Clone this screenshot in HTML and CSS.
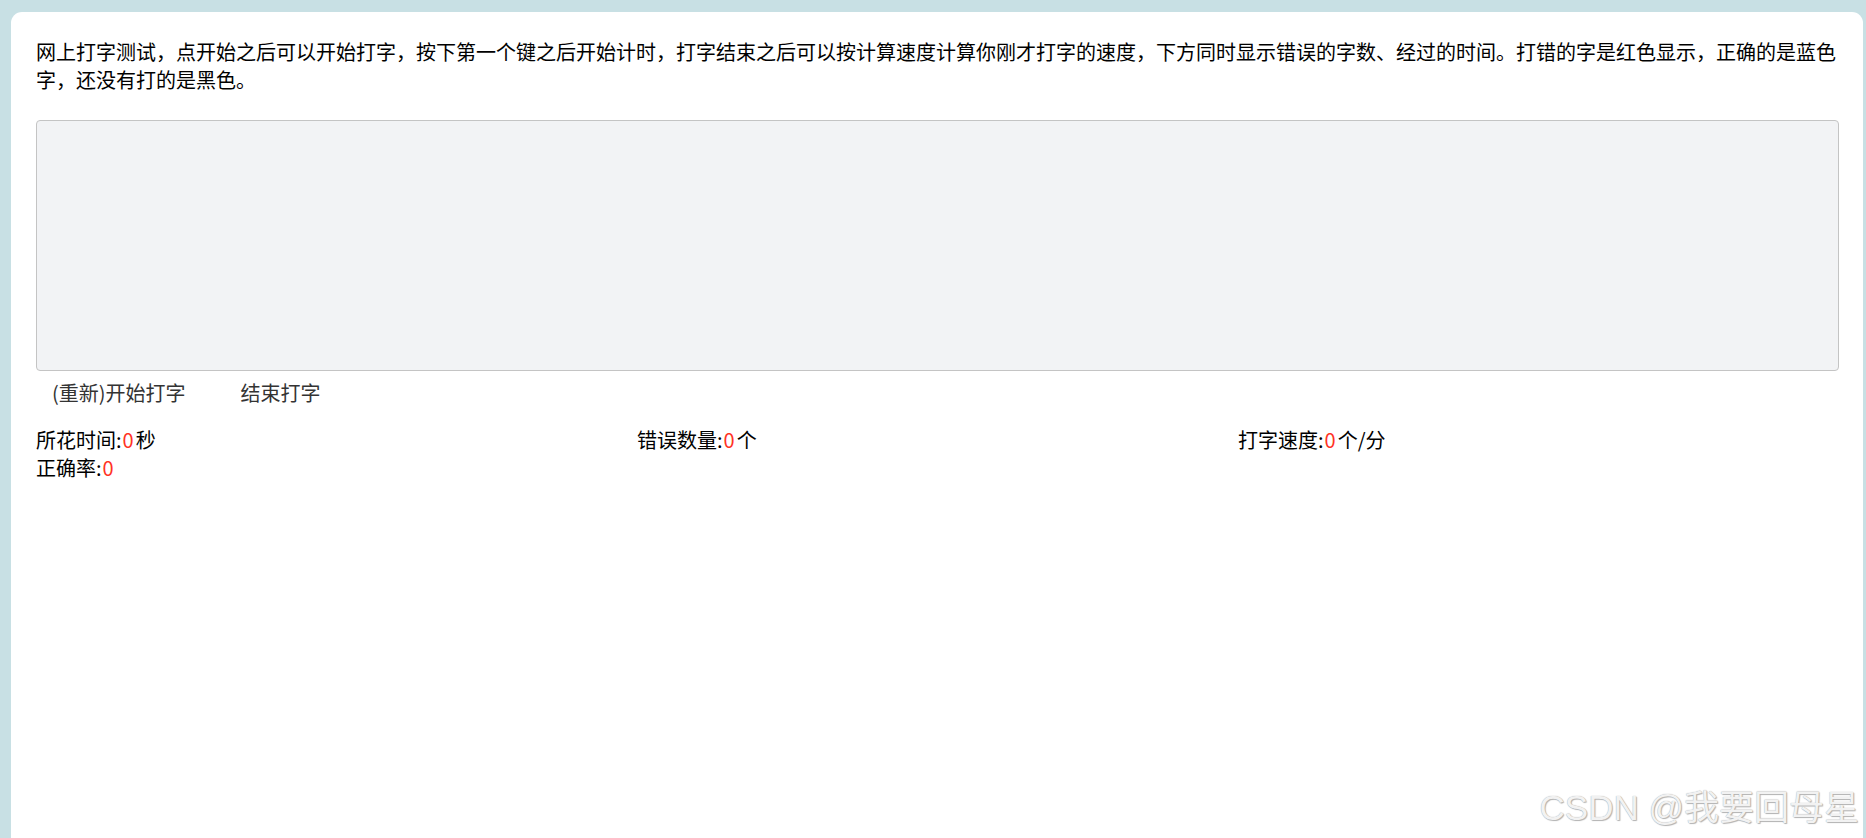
FILE: index.html
```html
<!DOCTYPE html>
<html lang="zh-CN">
<head>
<meta charset="UTF-8" />
<meta name="viewport" content="width=device-width, initial-scale=1" />
<title>网上打字测试</title>
<link rel="stylesheet" href="styles.css">
</head>
<body>

<div class="page">
  <p class="intro">网上打字测试，点开始之后可以开始打字，按下第一个键之后开始计时，打字结束之后可以按计算速度计算你刚才打字的速度，下方同时显示错误的字数、经过的时间。打错的字是红色显示，正确的是蓝色字，还没有打的是黑色。</p>

  <div class="text-box" id="textBox"></div>

  <div class="actions">
    <button class="btn" id="startBtn">(重新)开始打字</button>
    <button class="btn" id="endBtn">结束打字</button>
  </div>

  <div class="stats">
    <div class="stat">所花时间:<span class="num" id="time">0</span>秒</div>
    <div class="stat">错误数量:<span class="num" id="errors">0</span>个</div>
    <div class="stat">打字速度:<span class="num" id="speed">0</span>个/分</div>
    <div class="stat">正确率:<span class="num" id="rate">0</span></div>
  </div>
</div>

<div class="watermark">CSDN @我要回母星</div>

</body>
</html>
```

FILE: styles.css
```css
/* Reset */
* {
  margin: 0; padding: 0; box-sizing: border-box;
}
html, body {
  height: 100%;
  overflow: hidden;
}
body {
  background: #c8e0e4;
  font-family: "Noto Sans CJK SC", "Noto Sans", sans-serif;
  font-size: 20px;
  color: #000;
  padding: 12px 3px 0 11px;
}
.page {
  background: #fff;
  border-radius: 11px 11px 0 0;
  min-height: 100%;
  padding: 26px 24px 0 25px;
}
.intro {
  line-height: 28px;
  margin-bottom: 26px;
}
.text-box {
  height: 251px;
  background: #f2f3f5;
  border: 1px solid #c4c4c4;
  border-radius: 4px;
}
.actions {
  display: flex;
  gap: 23px;
  margin-top: 6px;
}
.btn {
  font: inherit;
  line-height: 26px;
  padding: 3px 16px;
  border: none;
  background: transparent;
  color: #333;
  cursor: pointer;
}
.stats {
  display: flex;
  flex-wrap: wrap;
  margin-top: 17px;
}
.stat {
  width: 33.333%;
  line-height: 28px;
}
.num {
  color: #ff3324;
  margin: 0 2px 0 1px;
}
.watermark {
  position: absolute;
  right: 7px;
  bottom: 13px;
  font-family: "Liberation Sans", "Noto Sans CJK SC", sans-serif;
  font-size: 35px;
  line-height: 1;
  color: #f2f2f2;
  text-shadow: 0 0 1px #9a9a9a, 1px 1px 1px #b5b5b5;
  pointer-events: none;
}
```
